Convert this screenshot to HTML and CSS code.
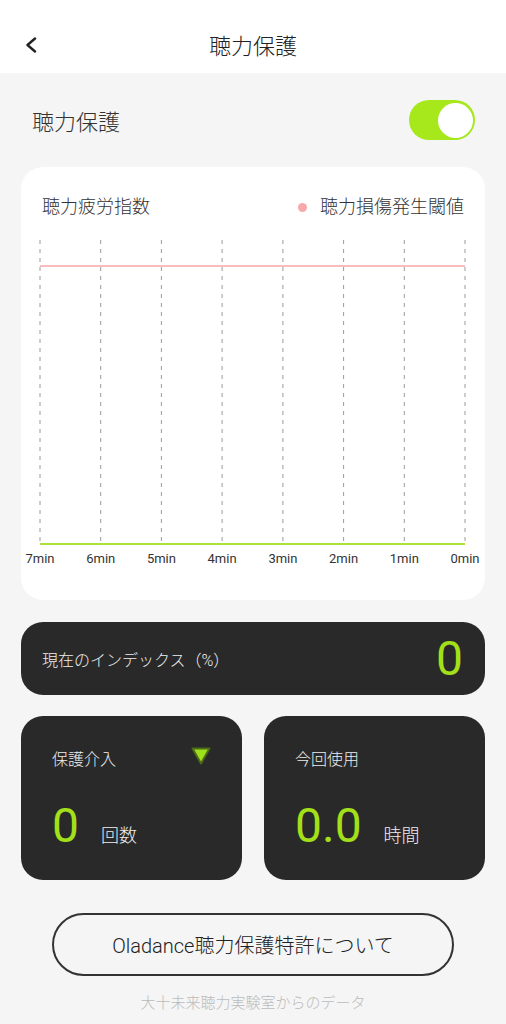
FILE: index.html
```html
<!DOCTYPE html>
<html lang="ja">
  <head>
    <meta charset="utf-8" />
    <meta name="viewport" content="width=device-width, initial-scale=1" />
    <title>聴力保護</title>
    <link rel="stylesheet" href="styles.css">
  </head>
  <body>
    <header class="topbar">
      <svg class="back" width="14" height="16" viewBox="0 0 14 16">
        <path d="M11 1.5 L3.5 8 L11 14.5" fill="none" stroke="#222" stroke-width="2.4" stroke-linecap="round" stroke-linejoin="round"/>
      </svg>
      <h1>聴力保護</h1>
    </header>

    <main class="page">
      <div class="switch-row">
        <span>聴力保護</span>
        <div class="toggle on"><div class="knob"></div></div>
      </div>

      <section class="chart-card">
        <div class="chart-head">
          <span class="chart-title">聴力疲労指数</span>
          <span class="legend"><i class="dot"></i>聴力損傷発生閾値</span>
        </div>
        <!-- grid lines: x = 19 + i*60.71 -->
        <svg class="chart" width="464" height="345" viewBox="0 0 464 345">
          <g stroke="#9a9a9a" stroke-width="1" stroke-dasharray="4 5">
            <line x1="19" y1="10" x2="19" y2="314"/>
            <line x1="79.7" y1="10" x2="79.7" y2="314"/>
            <line x1="140.4" y1="10" x2="140.4" y2="314"/>
            <line x1="201.1" y1="10" x2="201.1" y2="314"/>
            <line x1="261.9" y1="10" x2="261.9" y2="314"/>
            <line x1="322.6" y1="10" x2="322.6" y2="314"/>
            <line x1="383.3" y1="10" x2="383.3" y2="314"/>
            <line x1="444" y1="10" x2="444" y2="314"/>
          </g>
          <line x1="19" y1="36" x2="444" y2="36" stroke="#f6a6a6" stroke-width="1.6"/>
          <line x1="19" y1="314" x2="444" y2="314" stroke="#a8e23a" stroke-width="2"/>
          <g class="axis" text-anchor="middle">
            <text x="19" y="333">7min</text>
            <text x="79.7" y="333">6min</text>
            <text x="140.4" y="333">5min</text>
            <text x="201.1" y="333">4min</text>
            <text x="261.9" y="333">3min</text>
            <text x="322.6" y="333">2min</text>
            <text x="383.3" y="333">1min</text>
            <text x="444" y="333">0min</text>
          </g>
        </svg>
      </section>

      <section class="index-card">
        <span class="label">現在のインデックス（%）</span>
        <span class="big">0</span>
      </section>

      <div class="stats">
        <section class="stat">
          <div class="stat-head">
            <span class="label">保護介入</span>
            <svg class="tri" width="22" height="20" viewBox="0 0 22 20">
              <polygon points="2.5,2.5 19.5,2.5 11,17.5" fill="#9fe01c" stroke="#4d6b16" stroke-width="2" stroke-linejoin="round"/>
            </svg>
          </div>
          <div class="stat-value"><span class="big">0</span><span class="unit">回数</span></div>
        </section>
        <section class="stat">
          <div class="stat-head">
            <span class="label">今回使用</span>
          </div>
          <div class="stat-value"><span class="big">0.0</span><span class="unit">時間</span></div>
        </section>
      </div>

      <button class="about">Oladance聴力保護特許について</button>
      <p class="source">大十未来聴力実験室からのデータ</p>
    </main>
  </body>
</html>
```

FILE: styles.css
```css
body{
  margin: 0;
  background-color: #f5f5f5;
  font-family: Roboto, "Noto Sans CJK JP", sans-serif;
  font-weight: 300;
  color: #222;
}

.topbar{
  height: 73px;
  box-sizing: border-box;
  padding-top: 14px;
  background-color: #fff;
  display: flex;
  align-items: center;
  justify-content: center;
  position: relative;
}

.topbar h1{
  margin: 0;
  font-size: 22px;
  font-weight: 300;
  color: #222;
}

.topbar .back{
  position: absolute;
  left: 24px;
  top: 37px;
}

.page{
  padding: 0 21px;
}

.switch-row{
  display: flex;
  align-items: center;
  justify-content: space-between;
  height: 40px;
  margin-top: 27px;
  padding: 0 10px 0 11px;
  font-size: 22px;
  color: #333;
}

.toggle{
  width: 66px;
  height: 40px;
  border-radius: 20px;
  background-color: #a6e81c;
  display: flex;
  align-items: center;
  justify-content: flex-end;
  padding: 0 2px;
  box-sizing: border-box;
}

.toggle .knob{
  width: 35px;
  height: 35px;
  border-radius: 50%;
  background-color: #fff;
}

.chart-card{
  margin-top: 27px;
  height: 433px;
  background-color: #fff;
  border-radius: 22px;
  box-sizing: border-box;
  padding-top: 27px;
}

.chart-head{
  display: flex;
  justify-content: space-between;
  align-items: center;
  padding: 0 21px;
  font-size: 18px;
  line-height: 26px;
  color: #333;
}

.legend{
  display: flex;
  align-items: center;
}

.legend .dot{
  width: 9px;
  height: 9px;
  border-radius: 50%;
  background-color: #f7a9a9;
  margin-right: 13px;
}

.chart{
  display: block;
  margin-top: 10px;
}

.chart .axis{
  font-family: Roboto, sans-serif;
  font-size: 13px;
  font-weight: 400;
  fill: #333;
}

.index-card{
  margin-top: 22px;
  height: 73px;
  background-color: #292929;
  border-radius: 22px;
  display: flex;
  align-items: center;
  justify-content: space-between;
  padding: 0 22px 0 21px;
}

.label{
  font-size: 16px;
  color: #eee;
}

.big{
  font-family: Roboto, sans-serif;
  font-size: 48px;
  font-weight: 400;
  line-height: 56px;
  color: #a3e01a;
}

.stats{
  margin-top: 21px;
  display: grid;
  grid-template-columns: 1fr 1fr;
  gap: 22px;
}

.stat{
  height: 164px;
  background-color: #292929;
  border-radius: 22px;
  box-sizing: border-box;
  padding: 32px 30px 0 31px;
}

.stat-head{
  display: flex;
  justify-content: space-between;
  align-items: flex-start;
  height: 24px;
  line-height: 24px;
}

.stat-head .tri{
  margin-top: -2px;
}

.stat-value{
  margin-top: 26px;
  display: flex;
  align-items: baseline;
}

.stat-value .unit{
  font-size: 18px;
  color: #eee;
  margin-left: 22px;
}

.about{
  display: block;
  margin: 33px auto 0;
  width: 402px;
  height: 63px;
  border: 2px solid #333;
  border-radius: 32px;
  background-color: transparent;
  font-family: Roboto, "Noto Sans CJK JP", sans-serif;
  font-weight: 300;
  font-size: 20px;
  color: #222;
}

.source{
  margin: 15px 0 0;
  text-align: center;
  font-size: 15px;
  color: #bbb;
}
```
